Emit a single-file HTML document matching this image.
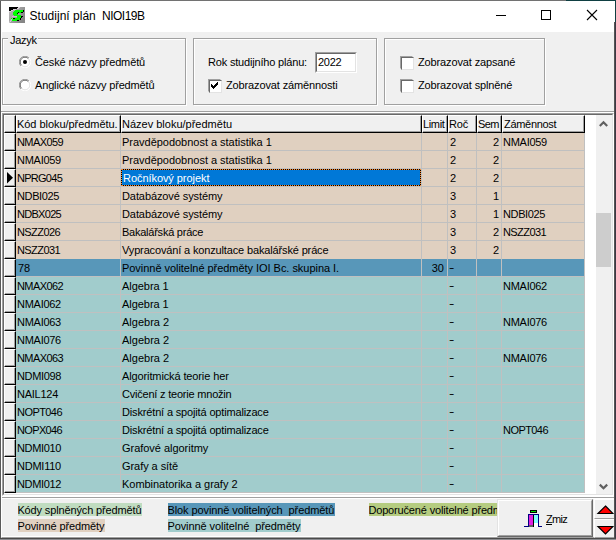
<!DOCTYPE html>
<html lang="cs"><head><meta charset="utf-8"><title>Studijní plán NIOI19B</title>
<style>
*{box-sizing:border-box;margin:0;padding:0}
html,body{width:616px;height:540px;overflow:hidden;background:#f0f0f0}
body{position:relative;font-family:"Liberation Sans",sans-serif;font-size:11px;color:#000;line-height:13px}
.abs,.abs *{position:absolute}
div,span,i,b{position:absolute;display:block;white-space:pre}
/* frame */
#edgeT{left:0;top:0;width:616px;height:1px;background:#727272}
#edgeT2{left:566px;top:0;width:50px;height:1px;background:#0f3f42}
#edgeL{left:0;top:1px;width:1px;height:539px;background:#5a5a5a}
#edgeR{left:614px;top:22px;width:1px;height:518px;background:#555}
#edgeR2{left:615px;top:0;width:1px;height:540px;background:linear-gradient(#0f3f42 0,#0f3f42 22px,#3c3844 22px)}
#edgeB{left:0;top:538px;width:616px;height:1px;background:#4a4a4a}
#edgeB2{left:0;top:539px;width:616px;height:1px;background:#8c8c90}
#title{left:1px;top:1px;width:614px;height:31px;background:#fff}
#ttext{left:29.5px;top:8px;font-size:12px;line-height:16px;letter-spacing:0.02px}
/* group boxes */
.gb{border:1px solid #dcdcdc;border-radius:0}
.gbw{border:1px solid #fff}
.lbl{line-height:13px;height:13px}
.lg{line-height:13px;height:13px;padding-top:1px;text-indent:-0.6px;overflow:hidden}
.radio{width:12px;height:12px;border-radius:50%;background:#fff;border:1px solid #333}
.chk{width:13px;height:13px;background:#fff;border:1px solid;border-color:#a0a0a0 #fff #fff #a0a0a0}
.chk:after{content:"";position:absolute;left:0;top:0;width:11px;height:11px;border:1px solid;border-color:#696969 #e3e3e3 #e3e3e3 #696969}
/* grid */
#grid{left:2px;top:113px;width:612px;height:382px}
.row{left:16px;width:569px;height:18px}
.rb{background:#e0d0c0}
.rt{background:#a1cccc}
.rk{background:#5897b9}
.c{top:0;height:17px;line-height:13px;padding-top:3px;overflow:hidden}
.c1{left:0;width:104px;padding-left:1px}
.c2{left:105px;width:300px;padding-left:1px;letter-spacing:0.03px}
.c3{left:406px;width:25px;text-align:right;padding-right:3px}
.c4{left:432px;width:28px;padding-left:2px}
.c5{left:461px;width:24px;text-align:right;padding-right:2px}
.c6{left:486px;width:82px;padding-left:1px}
.hy{position:relative;top:-1px;display:inline-block;font-style:normal;transform:scaleX(1.45);transform-origin:0 50%;margin-left:-1px}
.sel{background:#0078d7;color:#fff;outline:1px dotted #ff8a2a;outline-offset:-1px;box-shadow:inset 0 0 0 1px #000}
.vl{top:133px;width:1px;height:360px;background:#c0c0c0}
.hl{left:16px;width:569px;height:1px;background:#c0c0c0}
.ind{left:4px;width:12px;height:18px;background:#f0f0f0;border-top:1px solid #fff;border-left:1px solid #fff;border-bottom:1px solid #000;border-right:1px solid #000}
.ind:after{content:"";position:absolute;left:0;top:0;width:9px;height:15px;border-right:1px solid #a0a0a0;border-bottom:1px solid #a0a0a0}
.hd{top:115px;height:18px;background:#f0f0f0;border-top:1px solid #fff;border-left:1px solid #fff;border-bottom:1px solid #000;border-right:1px solid #000;line-height:13px;padding:2px 0 0 0;overflow:hidden}
.hd:after{content:"";position:absolute;left:0;top:0;right:0;bottom:0;border-right:1px solid #a0a0a0;border-bottom:1px solid #a0a0a0}
</style></head><body>
<div id="edgeT"></div><div id="edgeT2"></div>
<div id="title"></div>
<svg style="position:absolute;left:9px;top:7px" width="16" height="16" viewBox="0 0 16 16" shape-rendering="crispEdges"><defs><linearGradient id="ig" x1="0" y1="0" x2="1" y2="0.6"><stop offset="0" stop-color="#bcbcbc"/><stop offset="0.45" stop-color="#a4a4a4"/><stop offset="1" stop-color="#868686"/></linearGradient></defs><rect width="16" height="16" fill="url(#ig)"/><rect x="0" y="0" width="9" height="1" fill="#000"/><rect x="0" y="1" width="8" height="1" fill="#000"/><rect x="0" y="2" width="4" height="1" fill="#000"/><rect x="0" y="3" width="2" height="1" fill="#000"/><rect x="9" y="0" width="2" height="1" fill="#dcd4dc"/><rect x="8" y="1" width="2" height="1" fill="#dcd4dc"/><rect x="4" y="2" width="3" height="1" fill="#dcd4dc"/><rect x="2" y="3" width="2" height="1" fill="#dcd4dc"/><rect x="0" y="4" width="2" height="1" fill="#dcd4dc"/><rect x="6" y="3" width="8" height="1" fill="#00ff00"/><rect x="14" y="3" width="1" height="1" fill="#000"/><rect x="5" y="4" width="9" height="1" fill="#00ff00"/><rect x="14" y="4" width="1" height="1" fill="#000"/><rect x="4" y="5" width="5" height="1" fill="#00ff00"/><rect x="9" y="5" width="1" height="1" fill="#000"/><rect x="10" y="5" width="2" height="1" fill="#00ff00"/><rect x="12" y="5" width="2" height="1" fill="#000"/><rect x="4" y="6" width="4" height="1" fill="#00ff00"/><rect x="8" y="6" width="1" height="1" fill="#000"/><rect x="4" y="7" width="5" height="1" fill="#00ff00"/><rect x="5" y="8" width="7" height="1" fill="#00ff00"/><rect x="3" y="9" width="5" height="1" fill="#d8b0d8"/><rect x="8" y="9" width="4" height="1" fill="#00ff00"/><rect x="12" y="9" width="2" height="1" fill="#000"/><rect x="8" y="10" width="4" height="1" fill="#00ff00"/><rect x="12" y="10" width="1" height="1" fill="#000"/><rect x="2" y="11" width="9" height="1" fill="#00ff00"/><rect x="4" y="11" width="2" height="1" fill="#000"/><rect x="11" y="11" width="1" height="1" fill="#000"/><rect x="2" y="12" width="9" height="1" fill="#00ff00"/><rect x="11" y="12" width="1" height="1" fill="#000"/><rect x="3" y="13" width="5" height="1" fill="#00ff00"/><rect x="8" y="13" width="2" height="1" fill="#000"/><path d="M0.5 15.5 L3.5 11.5" stroke="#e8e0e8" stroke-width="1" fill="none" shape-rendering="auto"/></svg>
<div id="ttext">Studijní plán <span style="position:absolute;left:72.5px;top:0;letter-spacing:-0.5px">NIOI19B</span></div>
<svg style="position:absolute;left:490px;top:5px" width="120" height="22" viewBox="0 0 120 22" shape-rendering="crispEdges"><rect x="6" y="10" width="10" height="1" fill="#000"/><rect x="51.5" y="5.5" width="9" height="9" fill="none" stroke="#000" stroke-width="1"/><g shape-rendering="auto"><path d="M97 5 L107 15 M107 5 L97 15" stroke="#000" stroke-width="1.1" fill="none"/></g></svg>

<!-- group 1 -->
<div class="gbw" style="left:3px;top:39px;width:184px;height:67px"></div>
<div class="gb" style="left:2px;top:38px;width:184px;height:67px;border-color:#a0a0a0"></div>
<div style="left:8px;top:34px;width:30px;height:13px;background:#f0f0f0"></div>
<div class="lbl" style="left:10px;top:34px;letter-spacing:-0.3px">Jazyk</div>
<svg style="position:absolute;left:19px;top:56px" width="12" height="12" viewBox="0 0 12 12"><circle cx="6" cy="6" r="5.5" fill="#fff"/><path d="M1.9 10.1 A5.5 5.5 0 0 1 10.1 1.9" fill="none" stroke="#a0a0a0" stroke-width="1"/><path d="M10.1 1.9 A5.5 5.5 0 0 1 1.9 10.1" fill="none" stroke="#fff" stroke-width="1"/><path d="M2.6 9.4 A4.5 4.5 0 0 1 9.4 2.6" fill="none" stroke="#696969" stroke-width="1"/><path d="M9.4 2.6 A4.5 4.5 0 0 1 2.6 9.4" fill="none" stroke="#e3e3e3" stroke-width="1"/><circle cx="6" cy="6" r="2" fill="#000"/></svg>
<div class="lbl" style="left:35px;top:56px;letter-spacing:-0.12px">České názvy předmětů</div>
<svg style="position:absolute;left:19px;top:79px" width="12" height="12" viewBox="0 0 12 12"><circle cx="6" cy="6" r="5.5" fill="#fff"/><path d="M1.9 10.1 A5.5 5.5 0 0 1 10.1 1.9" fill="none" stroke="#a0a0a0" stroke-width="1"/><path d="M10.1 1.9 A5.5 5.5 0 0 1 1.9 10.1" fill="none" stroke="#fff" stroke-width="1"/><path d="M2.6 9.4 A4.5 4.5 0 0 1 9.4 2.6" fill="none" stroke="#696969" stroke-width="1"/><path d="M9.4 2.6 A4.5 4.5 0 0 1 2.6 9.4" fill="none" stroke="#e3e3e3" stroke-width="1"/></svg>
<div class="lbl" style="left:35px;top:79px;letter-spacing:-0.15px">Anglické názvy předmětů</div>
<!-- group 2 -->
<div class="gbw" style="left:194px;top:39px;width:184px;height:67px"></div>
<div class="gb" style="left:193px;top:38px;width:184px;height:67px;border-color:#a0a0a0"></div>
<div class="lbl" style="left:208px;top:56px;letter-spacing:-0.18px">Rok studijního plánu:</div>
<div style="left:315px;top:52px;width:42px;height:21px;background:#fff;border:1px solid;border-color:#a0a0a0 #fff #fff #a0a0a0"></div><div style="left:316px;top:53px;width:40px;height:19px;border:1px solid;border-color:#696969 #e3e3e3 #e3e3e3 #696969"></div>
<div class="lbl" style="left:318px;top:56px;letter-spacing:-0.3px">2022</div>
<div class="chk" style="left:208px;top:79px"></div>
<svg style="position:absolute;left:208px;top:79px" width="13" height="13" viewBox="0 0 13 13" shape-rendering="crispEdges"><path d="M3 5h1v3h-1zM4 6h1v3h-1zM5 7h1v3h-1zM6 6h1v3h-1zM7 5h1v3h-1zM8 4h1v3h-1zM9 3h1v3h-1z" fill="#000"/></svg>
<div class="lbl" style="left:226px;top:79px;letter-spacing:-0.13px">Zobrazovat záměnnosti</div>
<!-- group 3 -->
<div class="gbw" style="left:385px;top:39px;width:161px;height:67px"></div>
<div class="gb" style="left:384px;top:38px;width:161px;height:67px;border-color:#a0a0a0"></div>
<div class="chk" style="left:400px;top:56px"></div>
<div class="lbl" style="left:418px;top:56px;letter-spacing:-0.13px">Zobrazovat zapsané</div>
<div class="chk" style="left:400px;top:79px"></div>
<div class="lbl" style="left:418px;top:79px;letter-spacing:-0.13px">Zobrazovat splněné</div>

<!-- separator -->
<div style="left:1px;top:32px;width:1px;height:79px;background:#fff"></div>
<div style="left:1px;top:111px;width:613px;height:1px;background:#a0a0a0"></div>

<!-- grid frame -->
<div style="left:1px;top:112px;width:613px;height:1px;background:#fff"></div>
<div style="left:2px;top:113px;width:612px;height:383px;background:#fff;border-top:1px solid #a0a0a0;border-left:1px solid #a0a0a0;border-right:1px solid #fff;border-bottom:1px solid #fff"></div>
<div style="left:3px;top:114px;width:610px;height:381px;border-top:1px solid #696969;border-left:1px solid #696969;border-right:1px solid #e3e3e3;border-bottom:1px solid #e3e3e3"></div>
<div style="left:1px;top:496px;width:613px;height:1px;background:#fff"></div>
<div style="left:1px;top:497px;width:613px;height:1px;background:#a0a0a0"></div>
<!-- header -->
<div class="hd" style="left:4px;width:12px;top:115px"></div>
<div class="hd" style="left:16px;width:105px;letter-spacing:-0.05px">Kód bloku/předmětu.</div>
<div class="hd" style="left:121px;width:301px">Název bloku/předmětu</div>
<div class="hd" style="left:422px;width:26px;letter-spacing:-0.35px">Limit</div>
<div class="hd" style="left:448px;width:29px;letter-spacing:-0.2px">Roč</div>
<div class="hd" style="left:477px;width:25px;letter-spacing:-0.6px">Sem</div>
<div class="hd" style="left:502px;width:83px;padding-left:1px;letter-spacing:-0.3px">Záměnnost</div>
<div class="row rb" style="top:133px;height:18px"><span class="c c1" style="letter-spacing:-0.59px;">NMAX059</span><span class="c c2" style="letter-spacing:-0.02px;">Pravděpodobnost a statistika 1</span><span class="c c3"></span><span class="c c4">2</span><span class="c c5">2</span><span class="c c6" style="letter-spacing:-0.27px;">NMAI059</span></div>
<div class="ind" style="top:133px"></div>
<div class="row rb" style="top:151px;height:18px"><span class="c c1" style="letter-spacing:-0.27px;">NMAI059</span><span class="c c2" style="letter-spacing:-0.02px;">Pravděpodobnost a statistika 1</span><span class="c c3"></span><span class="c c4">2</span><span class="c c5">2</span></div>
<div class="ind" style="top:151px"></div>
<div class="row rb" style="top:169px;height:18px"><span class="c c1" style="letter-spacing:-0.73px;">NPRG045</span><span class="c c2 sel" style="letter-spacing:-0.06px;padding-left:2px">Ročníkový projekt</span><span class="c c3"></span><span class="c c4">2</span><span class="c c5">2</span></div>
<div class="ind" style="top:169px"></div>
<div class="row rb" style="top:187px;height:18px"><span class="c c1" style="letter-spacing:-0.38px;">NDBI025</span><span class="c c2" style="letter-spacing:-0.09px;">Databázové systémy</span><span class="c c3"></span><span class="c c4">3</span><span class="c c5">1</span></div>
<div class="ind" style="top:187px"></div>
<div class="row rb" style="top:205px;height:18px"><span class="c c1" style="letter-spacing:-0.7px;">NDBX025</span><span class="c c2" style="letter-spacing:-0.09px;">Databázové systémy</span><span class="c c3"></span><span class="c c4">3</span><span class="c c5">1</span><span class="c c6" style="letter-spacing:-0.38px;">NDBI025</span></div>
<div class="ind" style="top:205px"></div>
<div class="row rb" style="top:223px;height:18px"><span class="c c1" style="letter-spacing:-0.58px;">NSZZ026</span><span class="c c2" style="letter-spacing:-0.24px;">Bakalářská práce</span><span class="c c3"></span><span class="c c4">3</span><span class="c c5">2</span><span class="c c6" style="letter-spacing:-0.58px;">NSZZ031</span></div>
<div class="ind" style="top:223px"></div>
<div class="row rb" style="top:241px;height:18px"><span class="c c1" style="letter-spacing:-0.58px;">NSZZ031</span><span class="c c2" style="letter-spacing:-0.145px;">Vypracování a konzultace bakalářské práce</span><span class="c c3"></span><span class="c c4">3</span><span class="c c5">2</span></div>
<div class="ind" style="top:241px"></div>
<div class="row rk" style="top:259px;height:17px"><span class="c c1" style="letter-spacing:-0.12px;padding-left:2px;">78</span><span class="c c2" style="letter-spacing:-0.04px;">Povinně volitelné předměty IOI Bc. skupina I.</span><span class="c c3">30</span><span class="c c4"><i class="hy">-</i></span><span class="c c5"></span></div>
<div class="ind" style="top:259px"></div>
<div class="row rt" style="top:277px;height:18px"><span class="c c1" style="letter-spacing:-0.59px;">NMAX062</span><span class="c c2" style="letter-spacing:-0.05px;">Algebra 1</span><span class="c c3"></span><span class="c c4"><i class="hy">-</i></span><span class="c c5"></span><span class="c c6" style="letter-spacing:-0.27px;">NMAI062</span></div>
<div class="ind" style="top:277px"></div>
<div class="row rt" style="top:295px;height:18px"><span class="c c1" style="letter-spacing:-0.27px;">NMAI062</span><span class="c c2" style="letter-spacing:-0.05px;">Algebra 1</span><span class="c c3"></span><span class="c c4"><i class="hy">-</i></span><span class="c c5"></span></div>
<div class="ind" style="top:295px"></div>
<div class="row rt" style="top:313px;height:18px"><span class="c c1" style="letter-spacing:-0.27px;">NMAI063</span><span class="c c2" style="letter-spacing:0.0px;">Algebra 2</span><span class="c c3"></span><span class="c c4"><i class="hy">-</i></span><span class="c c5"></span><span class="c c6" style="letter-spacing:-0.27px;">NMAI076</span></div>
<div class="ind" style="top:313px"></div>
<div class="row rt" style="top:331px;height:18px"><span class="c c1" style="letter-spacing:-0.27px;">NMAI076</span><span class="c c2" style="letter-spacing:0.0px;">Algebra 2</span><span class="c c3"></span><span class="c c4"><i class="hy">-</i></span><span class="c c5"></span></div>
<div class="ind" style="top:331px"></div>
<div class="row rt" style="top:349px;height:18px"><span class="c c1" style="letter-spacing:-0.59px;">NMAX063</span><span class="c c2" style="letter-spacing:0.0px;">Algebra 2</span><span class="c c3"></span><span class="c c4"><i class="hy">-</i></span><span class="c c5"></span><span class="c c6" style="letter-spacing:-0.27px;">NMAI076</span></div>
<div class="ind" style="top:349px"></div>
<div class="row rt" style="top:367px;height:18px"><span class="c c1" style="letter-spacing:-0.35px;">NDMI098</span><span class="c c2" style="letter-spacing:-0.12px;">Algoritmická teorie her</span><span class="c c3"></span><span class="c c4"><i class="hy">-</i></span><span class="c c5"></span></div>
<div class="ind" style="top:367px"></div>
<div class="row rt" style="top:385px;height:18px"><span class="c c1" style="letter-spacing:-0.26px;">NAIL124</span><span class="c c2" style="letter-spacing:-0.21px;">Cvičení z teorie množin</span><span class="c c3"></span><span class="c c4"><i class="hy">-</i></span><span class="c c5"></span></div>
<div class="ind" style="top:385px"></div>
<div class="row rt" style="top:403px;height:18px"><span class="c c1" style="letter-spacing:-0.56px;">NOPT046</span><span class="c c2" style="letter-spacing:-0.155px;">Diskrétní a spojitá optimalizace</span><span class="c c3"></span><span class="c c4"><i class="hy">-</i></span><span class="c c5"></span></div>
<div class="ind" style="top:403px"></div>
<div class="row rt" style="top:421px;height:18px"><span class="c c1" style="letter-spacing:-0.65px;">NOPX046</span><span class="c c2" style="letter-spacing:-0.155px;">Diskrétní a spojitá optimalizace</span><span class="c c3"></span><span class="c c4"><i class="hy">-</i></span><span class="c c5"></span><span class="c c6" style="letter-spacing:-0.56px;">NOPT046</span></div>
<div class="ind" style="top:421px"></div>
<div class="row rt" style="top:439px;height:18px"><span class="c c1" style="letter-spacing:-0.35px;">NDMI010</span><span class="c c2" style="letter-spacing:-0.03px;">Grafové algoritmy</span><span class="c c3"></span><span class="c c4"><i class="hy">-</i></span><span class="c c5"></span></div>
<div class="ind" style="top:439px"></div>
<div class="row rt" style="top:457px;height:18px"><span class="c c1" style="letter-spacing:-0.24px;">NDMI110</span><span class="c c2" style="letter-spacing:-0.06px;">Grafy a sítě</span><span class="c c3"></span><span class="c c4"><i class="hy">-</i></span><span class="c c5"></span></div>
<div class="ind" style="top:457px"></div>
<div class="row rt" style="top:475px;height:18px"><span class="c c1" style="letter-spacing:-0.35px;">NDMI012</span><span class="c c2" style="letter-spacing:-0.03px;">Kombinatorika a grafy 2</span><span class="c c3"></span><span class="c c4"><i class="hy">-</i></span><span class="c c5"></span></div>
<div class="ind" style="top:475px"></div>
<div class="hl" style="top:150px"></div>
<div class="hl" style="top:168px"></div>
<div class="hl" style="top:186px"></div>
<div class="hl" style="top:204px"></div>
<div class="hl" style="top:222px"></div>
<div class="hl" style="top:240px"></div>
<div class="hl" style="top:276px"></div>
<div class="hl" style="top:294px"></div>
<div class="hl" style="top:312px"></div>
<div class="hl" style="top:330px"></div>
<div class="hl" style="top:348px"></div>
<div class="hl" style="top:366px"></div>
<div class="hl" style="top:384px"></div>
<div class="hl" style="top:402px"></div>
<div class="hl" style="top:420px"></div>
<div class="hl" style="top:438px"></div>
<div class="hl" style="top:456px"></div>
<div class="hl" style="top:474px"></div>
<div class="hl" style="top:492px"></div><div class="vl" style="left:120px"></div><div class="vl" style="left:421px"></div><div class="vl" style="left:447px"></div><div class="vl" style="left:476px"></div><div class="vl" style="left:501px"></div><div class="vl" style="left:584px"></div>
<!-- row pointer -->
<svg style="position:absolute;left:6px;top:172px" width="8" height="12" viewBox="0 0 8 12"><polygon points="1,0 7,5.75 1,11.5" fill="#000"/></svg>
<!-- scrollbar -->
<div style="left:596px;top:115px;width:16px;height:379px;background:#f0f0f0"></div>
<div style="left:596px;top:213px;width:15px;height:54px;background:#cdcdcd"></div>
<svg style="position:absolute;left:596px;top:115px" width="17" height="17" viewBox="0 0 17 17"><path d="M3.8 11 L7.5 7.3 L11.2 11" stroke="#606060" stroke-width="2.2" fill="none"/></svg>
<svg style="position:absolute;left:596px;top:476px" width="17" height="17" viewBox="0 0 17 17"><path d="M3.8 8.6 L7.5 12.3 L11.2 8.6" stroke="#606060" stroke-width="2.2" fill="none"/></svg>

<!-- bottom panel -->
<div style="left:1px;top:498px;width:613px;height:40px;border-top:1px solid #fff;border-left:1px solid #fff;border-bottom:1px solid #a0a0a0"></div>
<div style="left:1px;top:112px;width:1px;height:386px;background:#fff"></div>
<div class="lg" style="left:18px;top:503px;width:124px;background:#c0dcc0;letter-spacing:-0.14px">Kódy splněných předmětů</div>
<div class="lg" style="left:18px;top:519px;width:87px;background:#e0d0c0;letter-spacing:-0.1px">Povinné předměty</div>
<div class="lg" style="left:168px;top:503px;width:167px;background:#5897b9;letter-spacing:-0.09px">Blok povinně volitelných  předmětů</div>
<div class="lg" style="left:168px;top:519px;width:133px;background:#a1cccc;letter-spacing:-0.08px">Povinně volitelné  předměty</div>
<div class="lg" style="left:369px;top:503px;width:128px;background:#b5cc80;letter-spacing:-0.16px">Doporučené volitelné předměty</div>
<div style="left:2px;top:536px;width:495px;height:1px;background:#fff"></div>
<!-- button -->
<div style="left:497px;top:499px;width:96px;height:38px;background:#f0f0f0;border-top:1px solid #e3e3e3;border-left:1px solid #e3e3e3;border-right:1px solid #696969;border-bottom:1px solid #696969"></div>
<div style="left:498px;top:500px;width:94px;height:36px;border-top:1px solid #fff;border-left:1px solid #fff;border-right:1px solid #a0a0a0;border-bottom:1px solid #a0a0a0"></div>
<svg style="position:absolute;left:523px;top:509px" width="20" height="19" viewBox="0 0 20 19" shape-rendering="crispEdges">
<rect x="7" y="1" width="7" height="3" fill="#000"/><rect x="8" y="2" width="5" height="1" fill="#00e000"/>
<rect x="5" y="5" width="11" height="13" fill="#000080"/>
<rect x="6" y="6" width="4" height="11" fill="#e020e0"/>
<rect x="10" y="6" width="1" height="12" fill="#000"/>
<rect x="11" y="6" width="4" height="8" fill="#80ffff"/>
<rect x="11" y="14" width="4" height="4" fill="#fff"/>
<rect x="6" y="16" width="4" height="2" fill="#606060"/>
<rect x="1" y="17" width="5" height="1" fill="#000080"/><rect x="15" y="17" width="4" height="1" fill="#000080"/>
</svg>
<div class="lbl" style="left:546px;top:513px;letter-spacing:-0.7px"><u>Z</u>miz</div>
<!-- spin -->
<div style="left:594px;top:499px;width:24px;height:20px;background:#f0f0f0;border-top:1px solid #fff;border-left:1px solid #fff;border-bottom:1px solid #a0a0a0"></div>
<div style="left:594px;top:519px;width:24px;height:19px;background:#f0f0f0;border-top:1px solid #fff;border-left:1px solid #fff;border-bottom:1px solid #a0a0a0"></div>
<svg style="position:absolute;left:594px;top:499px" width="20" height="40" viewBox="0 0 20 40"><polygon points="11.5,7 19,14.5 4,14.5" fill="#ff0000" stroke="#000" stroke-width="1.2" stroke-linejoin="miter"/><polygon points="4,27.5 19,27.5 11.5,35" fill="#ff0000" stroke="#000" stroke-width="1.2"/></svg>

<div id="edgeL"></div><div id="edgeR"></div><div id="edgeR2"></div><div id="edgeB"></div><div id="edgeB2"></div>
</body></html>
